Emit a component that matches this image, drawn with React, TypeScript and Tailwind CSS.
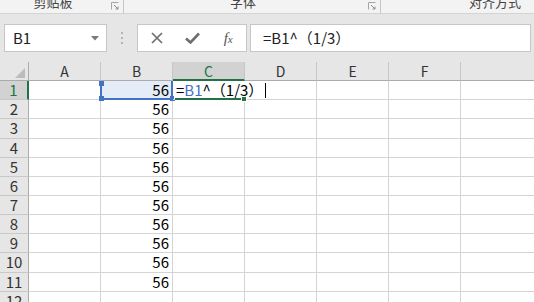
import React from 'react';

const columns = ['A', 'B', 'C', 'D', 'E', 'F'];

const rows = [
  { n: 2, h: 'h-[19px]' },
  { n: 3, h: 'h-[20px]' },
  { n: 4, h: 'h-[19px]' },
  { n: 5, h: 'h-[19px]' },
  { n: 6, h: 'h-[19px]' },
  { n: 7, h: 'h-[19px]' },
  { n: 8, h: 'h-[19px]' },
  { n: 9, h: 'h-[19px]' },
  { n: 10, h: 'h-[20px]' },
  { n: 11, h: 'h-[19px]' },
  { n: 12, h: 'h-[19px]' },
];

const Launcher = () => (
  <svg width="8" height="8" viewBox="0 0 8 8" className="absolute right-[4px] top-[2px]">
    <path d="M0.5 7.5V0.5H7.5" fill="none" stroke="#a6a6a6" strokeWidth="1" />
    <path d="M3 3L7 7M7 4.5V7H4.5" fill="none" stroke="#8c8c8c" strokeWidth="1" />
  </svg>
);

const RibbonLabels = () => (
  <div className="flex h-[14px] overflow-hidden border-b border-[#d4d4d4] bg-[#f3f3f3] text-[13px] text-[#444]">
    <div className="relative flex w-[124px] shrink-0 justify-center border-r border-[#c6c6c6] pr-[17px]">
      <span className="-mt-[7px] leading-[17px]">剪贴板</span>
      <Launcher />
    </div>
    <div className="relative flex w-[257px] shrink-0 justify-center border-r border-[#c6c6c6] pr-[18px]">
      <span className="-mt-[7px] leading-[17px]">字体</span>
      <Launcher />
    </div>
    <div className="flex w-[228px] shrink-0 justify-center">
      <span className="-mt-[7px] leading-[17px]">对齐方式</span>
    </div>
  </div>
);

const FormulaBar = () => (
  <div className="flex h-[48px] items-center pl-[4px]">
    <div className="flex h-[28px] w-[103px] shrink-0 items-center justify-between border border-[#c6c6c6] bg-white pl-[8px] pr-[7px] text-[15px] text-[#222]">
      <span>B1</span>
      <svg width="8" height="5" viewBox="0 0 8 5">
        <path d="M0 0H8L4 4.5Z" fill="#7a7a7a" />
      </svg>
    </div>
    <div className="flex w-[30px] shrink-0 flex-col items-center gap-[3px]">
      <span className="h-[2px] w-[2px] bg-[#b4b4b4]" />
      <span className="h-[2px] w-[2px] bg-[#b4b4b4]" />
      <span className="h-[2px] w-[2px] bg-[#b4b4b4]" />
    </div>
    <div className="flex h-[28px] w-[110px] shrink-0 items-center border border-[#c6c6c6] bg-white pl-[1px]">
      <div className="flex w-[36px] justify-center">
        <svg width="12" height="12" viewBox="0 0 12 12">
          <path d="M1 1L11 11M11 1L1 11" stroke="#6e6e6e" strokeWidth="1.7" />
        </svg>
      </div>
      <div className="flex w-[36px] justify-center">
        <svg width="15" height="12" viewBox="0 0 15 12">
          <path d="M1 6.5L5.5 10.5L14 1.5" fill="none" stroke="#6e6e6e" strokeWidth="2.6" />
        </svg>
      </div>
      <div className="flex w-[36px] justify-center font-['Liberation_Serif',serif] text-[15px] italic text-[#555]">
        <span>f</span>
        <span className="mt-[4px] text-[11px]">x</span>
      </div>
    </div>
    <div className="ml-[3px] flex h-[28px] w-[281px] shrink-0 items-center border border-[#c6c6c6] bg-white pl-[12px] text-[15px] text-[#222]">
      =B1^（1/3）
    </div>
  </div>
);

const HeaderRow = () => (
  <div className="flex h-[19px]">
    <div className="relative w-[29px] shrink-0 border-r border-b border-[#ababab] bg-[#e6e6e6]">
      <svg width="10" height="10" viewBox="0 0 10 10" className="absolute right-[3px] bottom-[2px]">
        <path d="M10 0V10H0Z" fill="#bcbcbc" />
      </svg>
    </div>
    {columns.map((c) =>
      c === 'C' ? (
        <div
          key={c}
          className="flex w-[72px] shrink-0 items-center justify-center border-r border-b-2 border-r-[#c6c6c6] border-b-[#217346] bg-[#d2d2d2] pt-[1px] text-[14px] text-[#217346]"
        >
          {c}
        </div>
      ) : (
        <div
          key={c}
          className="flex w-[72px] shrink-0 items-center justify-center border-r border-b border-r-[#c6c6c6] border-b-[#ababab] bg-[#e6e6e6] text-[14px] text-[#333]"
        >
          {c}
        </div>
      )
    )}
    <div className="w-[80px] shrink-0 border-b border-[#ababab] bg-[#e6e6e6]" />
  </div>
);

const FirstRow = () => (
  <div className="flex h-[19px]">
    <div className="flex w-[29px] shrink-0 items-center justify-center border-r-2 border-b border-r-[#217346] border-b-[#c8c8c8] bg-[#d2d2d2] text-[15px] text-[#217346]">
      1
    </div>
    <div className="w-[72px] shrink-0 border-r border-b border-[#d4d4d4]" />
    <div className="relative flex w-[72px] shrink-0 items-center justify-end border-r border-b border-[#d4d4d4] bg-[#e4ecf7] pr-[3px] text-[15px] text-black">
      56
      <div className="absolute -left-[1px] top-0 -right-[1px] -bottom-[1px] border-x-2 border-b-2 border-[#4472c4]" />
      <span className="absolute -left-[2px] top-0 h-[5px] w-[5px] bg-[#4472c4]" />
      <span className="absolute -left-[2px] -bottom-[2px] h-[5px] w-[5px] bg-[#4472c4]" />
      <span className="absolute -right-[3px] -bottom-[2px] h-[5px] w-[5px] bg-[#4472c4]" />
    </div>
    <div className="relative w-[72px] shrink-0 border-r border-b border-[#d4d4d4]">
      <div className="absolute left-[1px] top-0 bottom-0 z-10 flex items-center gap-[2px] bg-white pl-[2px] pr-[2px] whitespace-nowrap text-[15px] text-black">
        <span>
          =<span className="text-[#4472c4]">B1</span>^（1/3）
        </span>
        <span className="h-[15px] w-px bg-black" />
      </div>
      <div className="absolute left-[2px] -right-[1px] -bottom-[1px] z-20 h-[2px] bg-[#217346]" />
      <span className="absolute -right-[3px] -bottom-[3px] z-20 h-[6px] w-[6px] border border-white bg-[#217346]" />
    </div>
    {['D', 'E', 'F'].map((c) => (
      <div key={c} className="w-[72px] shrink-0 border-r border-b border-[#d4d4d4]" />
    ))}
    <div className="w-[80px] shrink-0 border-b border-[#d4d4d4]" />
  </div>
);

export default function App() {
  return (
    <div className="h-[302px] w-[534px] overflow-hidden bg-[#e6e6e6] font-['Noto_Sans_CJK_SC','Noto_Sans',sans-serif]">
      <RibbonLabels />
      <FormulaBar />
      <div className="bg-white">
        <HeaderRow />
        <FirstRow />
        {rows.map((r) => (
          <div key={r.n} className={`flex ${r.h}`}>
            <div className="flex w-[29px] shrink-0 items-center justify-center border-r border-b border-r-[#ababab] border-b-[#c8c8c8] bg-[#e6e6e6] text-[15px] text-[#333]">
              {r.n}
            </div>
            <div className="w-[72px] shrink-0 border-r border-b border-[#d4d4d4]" />
            <div className="flex w-[72px] shrink-0 items-center justify-end border-r border-b border-[#d4d4d4] pr-[3px] text-[15px] text-black">
              {r.n <= 11 ? '56' : ''}
            </div>
            {['C', 'D', 'E', 'F'].map((c) => (
              <div key={c} className="w-[72px] shrink-0 border-r border-b border-[#d4d4d4]" />
            ))}
            <div className="w-[80px] shrink-0 border-b border-[#d4d4d4]" />
          </div>
        ))}
      </div>
    </div>
  );
}
